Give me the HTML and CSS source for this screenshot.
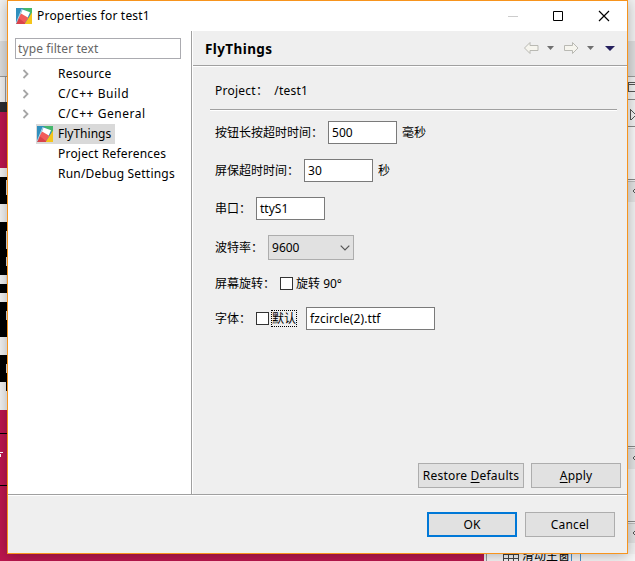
FILE: index.html
```html
<!DOCTYPE html>
<html lang="zh-CN">
<head>
<meta charset="utf-8">
<title>Properties for test1</title>
<link rel="stylesheet" href="styles.css">
</head>
<body>
<svg class="desktop" width="635" height="561" viewBox="0 0 635 561" shape-rendering="crispEdges">
  <rect width="635" height="561" fill="#f0f0f0"/>
  <rect y="41" width="635" height="35" fill="#dcdcdc"/>
  <path d="M0 76.500H635M5.500 77V102" stroke="#999" fill="none"/>
  <rect y="102" width="8" height="10" fill="#2c2c30"/>
  <rect y="112" width="8" height="56" fill="#bb164e"/>
  <path d="M0 177h8v27H0zM0 222h8v53H0zM0 284h8v9H0zM0 302h8v35H0zM0 355h8v27H0zM6 382h2v9H6z"/>
  <path d="M6 180h1v15H6zM6 231h1v18H6zM6 257h1v9H6zM6 311h1v9H6zM6 364h1v9H6zM6 275h1v9H6z" fill="#ddd"/>
  <rect y="410" width="484" height="151" fill="#bb164e"/>
  <path d="M0 433.500H8M0 485.500H8" stroke="#000"/>
  <path d="M0 452.500h3M1 454l-1 3" stroke="#fff" fill="none"/>
  <path d="M486.500 554V561" stroke="#999"/>
  <rect x="487" y="554" width="148" height="7" fill="#f6f6f6"/>
  <path d="M503 554.500h15M503 558.500h15M503.500 554v7M508.500 554v7M513.500 554v7M518.500 554v7" stroke="#444"/>
  <path d="M571.500 554v7M580.500 554v7" stroke="#4b8fc9"/>
  <rect x="628" y="126" width="7" height="53" fill="#f7f7f7"/>
  <rect x="628" y="182" width="7" height="20" fill="#e1e1e1"/>
  <rect x="628" y="448" width="7" height="21" fill="#e1e1e1"/>
  <rect x="628" y="523" width="7" height="20" fill="#e1e1e1"/>
  <path d="M628 99.500h7M628 126.500h7M628 179.500h7M628 446.500h7M628 521.500h7" stroke="#888"/>
  <path d="M628 181.500h7M628 448.500h7M628 523.500h7" stroke="#bbb"/>
  <path d="M635 82.500h-7v9h7M628 84.500h7M630.500 109v11M631 110l5 5l-5 5M635 189l-2 2l2 2M635 456l-2 2l2 2M635 531l-2 2l2 2" stroke="#555" fill="none"/>
</svg>
<div class="peek">滑动主窗</div>

<svg class="defs" width="0" height="0">
  <symbol id="logo" viewBox="0 0 16 16">
    <path d="M0 0h16v16H0z" fill="#2f8fbe"/>
    <path d="M6 0h10v8L12 4z" fill="#45b76c"/>
    <path d="M16 4.500V16H8.500z" fill="#f5c51b"/>
    <path d="M0 16l3.500-8L9 14v2z" fill="#d9434a"/>
    <path d="M6.500 1.500l7.500 2.800l-3.500 8L3.500 9z" fill="#fff"/>
    <path d="M5 5.500l7.300 4.300L9 15L2.500 10z" fill="#f15b5b"/>
    <path d="M0 15.500L6 1" stroke="#dff0f5" stroke-width=".7"/>
  </symbol>
  <symbol id="chevron" viewBox="0 0 8 10"><path d="M1.500 1l4 4l-4 4" fill="none" stroke="#a6a6a6" stroke-width="1.800"/></symbol>
</svg>

<main class="dialog">
  <header class="titlebar">
    <svg class="logo"><use href="#logo"/></svg>
    <h1 class="caption">Properties for test1</h1>
    <svg class="controls" width="104" height="12" viewBox="0 0 104 12">
      <path d="M0 6.500h10" stroke="#ccc"/>
      <path d="M45.500 1.500h9v9h-9z" fill="none" stroke="#000"/>
      <path d="M91 1l10 10M101 1l-10 10" stroke="#000" stroke-width="1.200"/>
    </svg>
  </header>
  <div class="content">
    <nav class="sidebar">
      <input class="filter" placeholder="type filter text" aria-label="Filter">
      <ul class="tree">
        <li><svg class="chev"><use href="#chevron"/></svg><span>Resource</span></li>
        <li><svg class="chev"><use href="#chevron"/></svg><span class="loose">C/C++ Build</span></li>
        <li><svg class="chev"><use href="#chevron"/></svg><span class="loose">C/C++ General</span></li>
        <li class="selected"><svg class="logo"><use href="#logo"/></svg><span>FlyThings</span></li>
        <li><span>Project References</span></li>
        <li><span>Run/Debug Settings</span></li>
      </ul>
    </nav>
    <section class="page">
      <div class="page-head">
        <h2>FlyThings</h2>
        <svg width="92" height="14" viewBox="0 0 92 14">
          <path d="M.5 7l5.500-5.500v3h8v5H6v3z" fill="#f6f5ee" stroke="#b9b9b3"/>
          <path d="M23 5h7l-3.500 4z" fill="#707070"/>
          <path d="M54 7l-5.500-5.500v3h-8v5h8v3z" fill="#f6f5ee" stroke="#b9b9b3"/>
          <path d="M63 5h7l-3.500 4z" fill="#707070"/>
          <path d="M81 5h10l-5 5z" fill="#25205e"/>
        </svg>
      </div>
      <div class="form">
        <div class="project"><span>Project：</span><span>/test1</span></div>
        <div class="row"><label>按钮长按超时时间：</label><div class="field">500</div><span>毫秒</span></div>
        <div class="row"><label>屏保超时时间：</label><div class="field">30</div><span>秒</span></div>
        <div class="row"><label>串口：</label><div class="field">ttyS1</div></div>
        <div class="row baud"><label>波特率：</label><div class="combo"><span>9600</span><svg width="10" height="6" viewBox="0 0 10 6"><path d="M.7.700L5 5L9.300.700" fill="none" stroke="#555" stroke-width="1.200"/></svg></div></div>
        <div class="row rotate"><label>屏幕旋转：</label><i class="check"></i><span class="check-text">旋转 90°</span></div>
        <div class="row"><label>字体：</label><i class="check"></i><span class="check-text focus">默认</span><div class="field wide">fzcircle(2).ttf</div></div>
      </div>
      <div class="page-actions">
        <button class="btn restore">Restore <u>D</u>efaults</button>
        <button class="btn"><u>A</u>pply</button>
      </div>
    </section>
  </div>
  <footer class="footer">
    <button class="btn primary">OK</button>
    <button class="btn">Cancel</button>
  </footer>
</main>
</body>
</html>
```
FILE: styles.css
```css
* { box-sizing: border-box; }
body {
  margin: 0;
  width: 635px;
  height: 561px;
  overflow: hidden;
  position: relative;
  background: #f0f0f0;
  color: #000;
  font: 12px/16px "Noto Sans", "Noto Sans CJK SC", sans-serif;
  letter-spacing: 0;
}
.desktop { position: absolute; left: 0; top: 0; }
.peek { position: absolute; left: 522px; top: 548px; height: 13px; overflow: hidden; }
.defs { position: absolute; }
.dialog {
  position: absolute;
  left: 7px;
  top: 0;
  width: 621px;
  height: 554px;
  display: flex;
  flex-direction: column;
  border: 1px solid #f7941d;
  background: #efefef;
  box-shadow: 0 2px 12px rgba(0, 0, 0, .28);
}
.titlebar {
  height: 30px;
  flex: none;
  display: flex;
  align-items: center;
  padding: 0 15px 0 8px;
  background: #fff;
}
.logo { width: 16px; height: 16px; flex: none; }
.caption { margin: 0 auto 0 5px; font-size: 12px; font-weight: 400; letter-spacing: .2px; }
.content { height: 463px; flex: none; display: flex; }
.sidebar {
  width: 184px;
  flex: none;
  background: #fff;
  border-right: 1px solid #a0a0a0;
  padding: 7px 0 0 7px;
}
.filter {
  display: block;
  width: 166px;
  height: 21px;
  padding: 0 2px;
  border: 1px solid #ababb0;
  background: #fff;
  font: inherit;
  letter-spacing: .1px;
}
.filter::placeholder { color: #666; opacity: 1; }
.tree { list-style: none; margin: 5px 0 0; padding: 0; letter-spacing: .2px; }
.tree li { height: 20px; display: flex; align-items: center; position: relative; padding-left: 43px; }
.loose { letter-spacing: .53px; }
.chev { width: 8px; height: 10px; margin: 0 28px 0 -36px; }
.tree .selected { width: 79px; margin-left: 21px; padding-left: 1px; background: #d9d9d9; letter-spacing: 0; }
.selected span { margin-left: 5px; }
.page { flex: 1; display: flex; flex-direction: column; border-left: 1px solid #fff; }
.page-head {
  height: 35px;
  flex: none;
  display: flex;
  align-items: center;
  justify-content: space-between;
  padding: 0 11px 0 12px;
  border-bottom: 1px solid #a0a0a0;
  box-shadow: 0 1px #fff;
}
.page-head h2 { margin: 1px 0 0; font-size: 13.5px; letter-spacing: .4px; }
.form { flex: 1; padding: 0 10px 0 17px; }
.project {
  display: flex;
  gap: 6px;
  height: 44px;
  padding: 17px 5px 0;
  border-bottom: 1px solid #a0a0a0;
  box-shadow: 0 1px #fff;
  margin-bottom: 11px;
  letter-spacing: .25px;
}
.row { display: flex; align-items: center; gap: 5px; height: 23px; margin: 0 0 15px 5px; }
.field { width: 69px; height: 23px; padding: 3px; border: 1px solid #7a7a7a; background: #fff; }
.wide { width: 129px; margin-left: 4px; letter-spacing: .1px; }
.baud { height: 25px; margin-bottom: 12px; }
.combo {
  width: 86px;
  height: 25px;
  display: flex;
  align-items: center;
  justify-content: space-between;
  padding: 0 3px;
  border: 1px solid #adadad;
  background: #e1e1e1;
}
.rotate { margin-bottom: 12px; }
.check { width: 13px; height: 13px; border: 1px solid #333; background: #fff; }
.check-text { height: 17px; margin-left: -3px; padding: 0 1px; line-height: 17px; }
.focus { outline: 1px dotted #000; outline-offset: -1px; }
.page-actions { display: flex; justify-content: flex-end; gap: 7px; padding: 0 6px 6px 0; }
.btn {
  width: 90px;
  height: 25px;
  padding: 0;
  border: 1px solid #adadad;
  border-radius: 0;
  background: #e1e1e1;
  color: #000;
  font: inherit;
  letter-spacing: .15px;
}
.restore { width: 106px; letter-spacing: .2px; }
.primary { border: 2px solid #0078d7; }
u { text-underline-offset: 2px; }
.footer {
  flex: 1;
  display: flex;
  justify-content: flex-end;
  gap: 8px;
  padding: 17px 12px 0;
  border-top: 1px solid #a0a0a0;
  box-shadow: inset 0 1px #fff;
}
```
